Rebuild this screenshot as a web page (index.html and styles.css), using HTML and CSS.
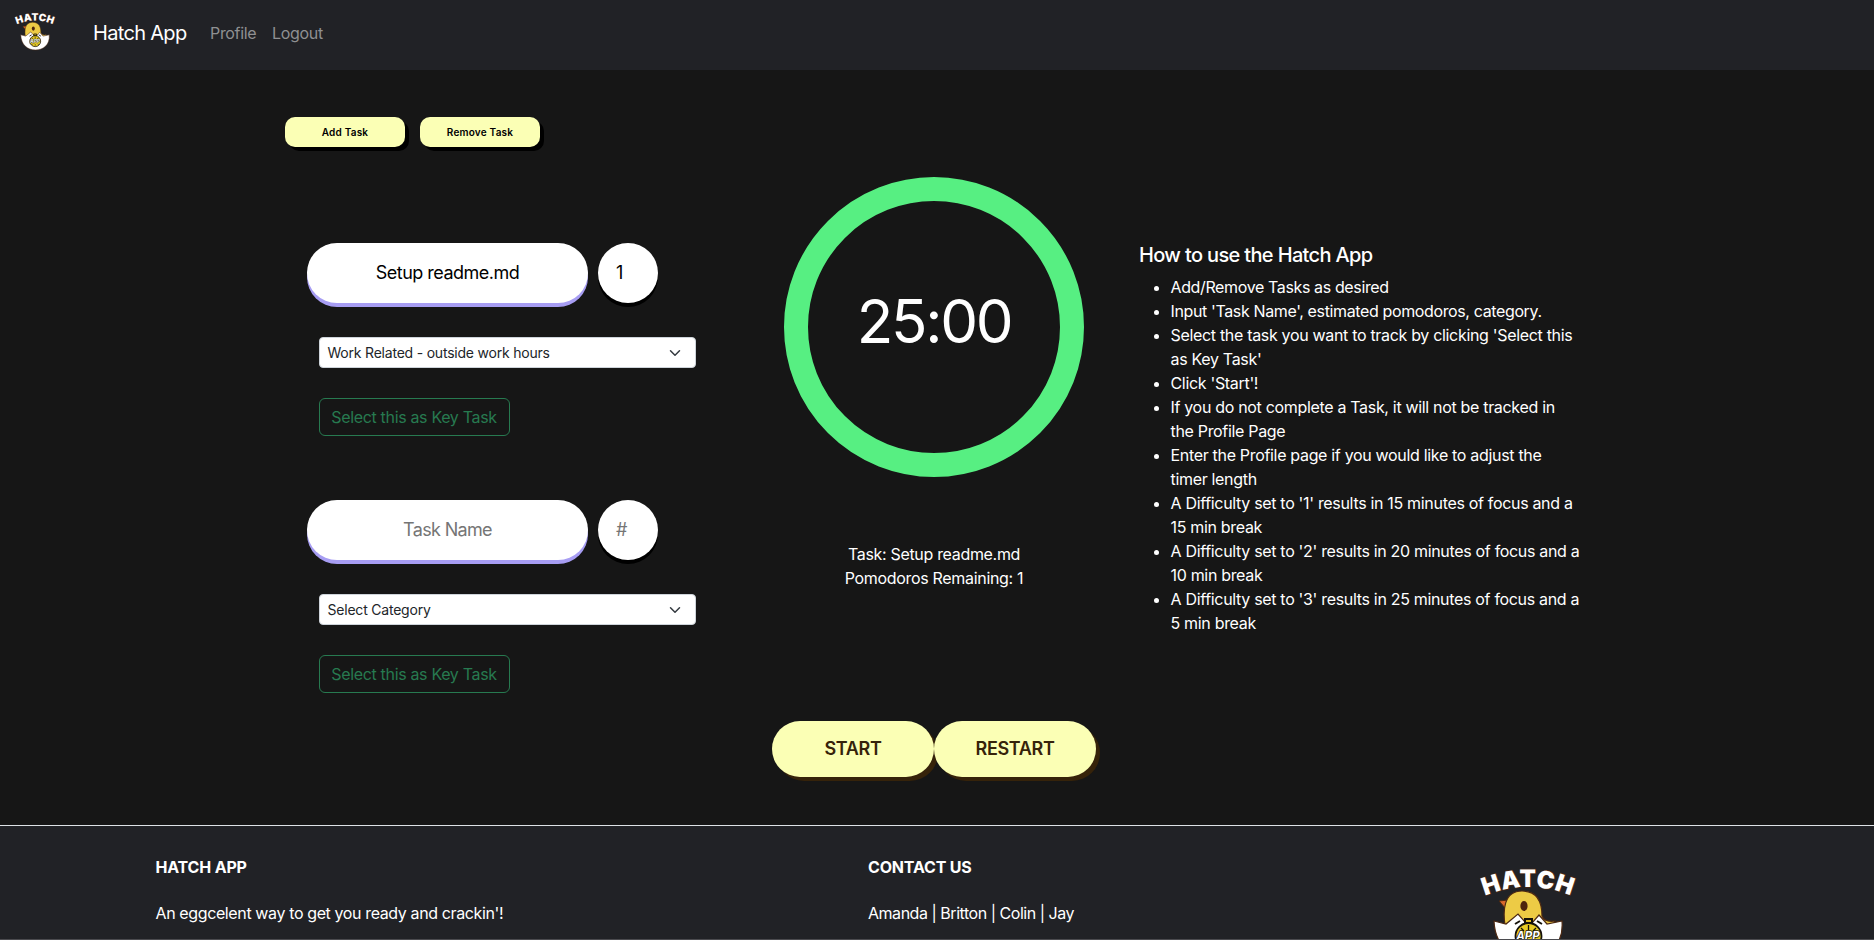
FILE: index.html
```
<!DOCTYPE html>
<html lang="en">
<head>
<meta charset="utf-8">
<title>Hatch App</title>
<link rel="stylesheet" href="styles.css">
</head>
<body>
<nav class="navbar">
  <svg class="nav-logo" viewBox="0 0 100 92">
    <path id="arc-nav" d="M2 31 Q50 9 98 31" fill="none"/>
    <text class="logo-word" text-anchor="middle"><textPath href="#arc-nav" startOffset="50%">HATCH</textPath></text>
    <path d="M21 34l9-1-2 9z" fill="#d9682c" stroke="#4d2912"/>
    <path d="M27 58C25 45 25 24 44 24c17 0 20 13 20 25 2 5 6 6 13 5l-7 14H30z" fill="#edcb45" stroke="#4d2912" stroke-width="1.2"/>
    <ellipse cx="46" cy="39" rx="3.6" ry="5" fill="#4d240d"/>
    <path d="M16 54l12 3 12-10 7 8h8l6-7 8 9 15-3C86 78 70 90 51 90S17 78 16 54z" fill="#fff" stroke="#4d2912" stroke-width="1.2"/>
    <path d="M47 52h7v4h-7zM37 57l5-3M64 57l-5-3" fill="#e3bd20" stroke="#16120a" stroke-width="2"/>
    <circle cx="50.500" cy="69" r="13" fill="#e8cb24" stroke="#16120a" stroke-width="1.800"/>
    <path d="M50.500 58v5M43 61l3 3M58 61l-3 3M50.500 76v4M44 76l-2 2M57 76l2 2" stroke="#16120a" stroke-width="1.300"/>
    <text class="logo-app" x="50" y="73" text-anchor="middle">APP</text>
  </svg>
  <a class="brand">Hatch App</a>
  <a class="nav-link profile">Profile</a>
  <a class="nav-link">Logout</a>
</nav>

<main class="main">
  <div class="toolbar">
    <button class="tool-btn">Add Task</button>
    <button class="tool-btn">Remove Task</button>
  </div>
  <div class="columns">
    <section class="tasks">
      <div class="task">
        <div class="task-row">
          <div class="task-name">Setup readme.md</div>
          <div class="task-count">1</div>
        </div>
        <div class="select">Work Related - outside work hours
          <svg class="chevron" viewBox="0 0 16 16"><path d="M2 5l6 6 6-6"/></svg></div>
        <button class="key-btn">Select this as Key Task</button>
      </div>
      <div class="task">
        <div class="task-row">
          <div class="task-name empty">Task Name</div>
          <div class="task-count empty">#</div>
        </div>
        <div class="select">Select Category
          <svg class="chevron" viewBox="0 0 16 16"><path d="M2 5l6 6 6-6"/></svg></div>
        <button class="key-btn">Select this as Key Task</button>
      </div>
    </section>

    <section class="timer">
      <div class="ring"><span class="clock">25:00</span></div>
      <div class="status">Task: Setup readme.md<br>Pomodoros Remaining: 1</div>
      <div class="controls">
        <button class="control">START</button>
        <button class="control">RESTART</button>
      </div>
    </section>

    <section class="help">
      <h5 class="help-title">How to use the Hatch App</h5>
      <ul class="help-list">
        <li class="tight">Add/Remove Tasks as desired</li>
        <li class="tight">Input 'Task Name', estimated pomodoros, category.</li>
        <li>Select the task you want to track by clicking 'Select this<br>as Key Task'</li>
        <li>Click 'Start'!</li>
        <li>If you do not complete a Task, it will not be tracked in<br>the Profile Page</li>
        <li>Enter the Profile page if you would like to adjust the<br>timer length</li>
        <li>A Difficulty set to '1' results in 15 minutes of focus and a<br>15 min break</li>
        <li>A Difficulty set to '2' results in 20 minutes of focus and a<br>10 min break</li>
        <li>A Difficulty set to '3' results in 25 minutes of focus and a<br>5 min break</li>
      </ul>
    </section>
  </div>
</main>

<footer class="footer">
  <div class="foot-col about"><h6 class="foot-title">HATCH APP</h6><p class="foot-text">An eggcelent way to get you ready and crackin'!</p></div>
  <div class="foot-col contact"><h6 class="foot-title">CONTACT US</h6><p class="foot-text">Amanda | Britton | Colin | Jay</p></div>
  <svg class="foot-logo" viewBox="0 0 100 92">
    <path id="arc-foot" d="M2 31 Q50 9 98 31" fill="none"/>
    <text class="logo-word" text-anchor="middle"><textPath href="#arc-foot" startOffset="50%">HATCH</textPath></text>
    <path d="M21 34l9-1-2 9z" fill="#d9682c" stroke="#4d2912"/>
    <path d="M27 58C25 45 25 24 44 24c17 0 20 13 20 25 2 5 6 6 13 5l-7 14H30z" fill="#edcb45" stroke="#4d2912" stroke-width="1.2"/>
    <ellipse cx="46" cy="39" rx="3.6" ry="5" fill="#4d240d"/>
    <path d="M16 54l12 3 12-10 7 8h8l6-7 8 9 15-3C86 78 70 90 51 90S17 78 16 54z" fill="#fff" stroke="#4d2912" stroke-width="1.2"/>
    <path d="M47 52h7v4h-7zM37 57l5-3M64 57l-5-3" fill="#e3bd20" stroke="#16120a" stroke-width="2"/>
    <circle cx="50.500" cy="69" r="13" fill="#e8cb24" stroke="#16120a" stroke-width="1.800"/>
    <path d="M50.500 58v5M43 61l3 3M58 61l-3 3M50.500 76v4M44 76l-2 2M57 76l2 2" stroke="#16120a" stroke-width="1.300"/>
    <text class="logo-app" x="50" y="73" text-anchor="middle">APP</text>
  </svg>
</footer>
</body>
</html>
```
FILE: styles.css
```
* { box-sizing: border-box; }
body {
  margin: 0;
  height: 940px;
  overflow: hidden;
  background: #161616;
  color: #fff;
  font: 16px/24px Inter, sans-serif;
  letter-spacing: -0.32px;
}
button { font-family: inherit; border: 0; padding: 0; }
.logo-word { font: 900 24px Inter, sans-serif; letter-spacing: 0.4px; fill: #fff; stroke: #4d2912; stroke-width: 1.5px; paint-order: stroke; }
.logo-app { font: italic 700 11.5px Inter, sans-serif; letter-spacing: 0; fill: #fff; stroke: #16120a; stroke-width: 1.6px; paint-order: stroke; }

.navbar { height: 70px; display: flex; background: #212226; padding: 12px 0 0 13.500px; }
.nav-logo { width: 42px; height: 39px; overflow: visible; }
.brand { margin-left: 37.500px; width: 117px; font-size: 20px; line-height: 42px; letter-spacing: -0.68px; }
.nav-link { line-height: 42px; color: #8f9092; }
.profile { width: 62px; }

.main { height: 755px; padding: 47px 0 0 285px; }
.toolbar { display: flex; gap: 15px; }
.tool-btn {
  width: 120px; height: 30px;
  border-radius: 10px;
  background: #fbffb5;
  box-shadow: 4px 4px 0 #000;
  color: #000;
  font-size: 10px; font-weight: 600;
  letter-spacing: 0.2px;
}
.columns { display: flex; }
.tasks { width: 487px; padding: 96px 0 0 22px; }
.task { height: 257px; }
.task-row { display: flex; gap: 10px; margin-bottom: 34px; }
.task-name {
  width: 281px; height: 60px;
  border-radius: 30px;
  background: #fff;
  box-shadow: 0 4px 0 #a79df3;
  color: #000;
  font-size: 18px; line-height: 60px;
  letter-spacing: -0.52px;
  text-align: center;
}
.task-count {
  width: 60px; height: 60px;
  padding-left: 18px;
  border-radius: 50%;
  background: #fff;
  box-shadow: 0 4px 0 #000;
  color: #000;
  font-size: 18px; line-height: 60px;
}
.task-name.empty { letter-spacing: -0.65px; color: #757575; }
.task-count.empty { color: #757575; }
.select {
  display: flex; justify-content: space-between; align-items: center;
  width: 377px; height: 31px;
  margin: 0 0 30px 12px;
  padding: 0 12px 0 7.500px;
  border: 1px solid #ced4da; border-radius: 4px;
  background: #fff;
  color: #212529;
  font-size: 14px;
  letter-spacing: -0.21px;
}
.chevron { width: 16px; height: 12px; fill: none; stroke: #343a40; stroke-width: 2; stroke-linecap: round; stroke-linejoin: round; }
.key-btn {
  display: block;
  width: 191px; height: 38px;
  margin-left: 12px;
  padding-right: 1px;
  border: 1px solid #277a50; border-radius: 6px;
  background: transparent;
  color: #277a50;
  font-size: 16px;
  letter-spacing: -0.33px;
}

.timer { width: 324px; padding-top: 30px; }
.ring {
  width: 300px; height: 300px;
  margin: 0 auto;
  border: 24px solid #57ef82; border-radius: 50%;
  text-align: center;
}
.clock { font-size: 60px; line-height: 241px; letter-spacing: -2.300px; }
.status { margin-top: 65px; text-align: center; }
.controls { display: flex; margin-top: 131px; }
.control {
  flex: 1; height: 56px;
  padding-bottom: 1px;
  border-radius: 28px;
  background: #fbffb5;
  box-shadow: 4px 4px 0 #36230a;
  color: #36230a;
  font-size: 18px; font-weight: 600;
  letter-spacing: -0.35px;
}

.help { margin-left: 43px; padding-top: 96px; white-space: nowrap; }
.help-title { margin: 0 0 8px; font-size: 20px; line-height: 24px; font-weight: 500; letter-spacing: -0.65px; }
.help-list { margin: 0; padding-left: 31.500px; }
.tight { letter-spacing: -0.37px; }

.footer { height: 115px; display: flex; padding: 0 0 0 155.500px; background: #212226; border-top: 1px solid #dee2e6; border-bottom: 1px solid #4b4b4f; overflow: hidden; }
.foot-col { padding-top: 29px; }
.about { width: 712.500px; letter-spacing: -0.38px; }
.contact { width: 610px; letter-spacing: -0.47px; }
.foot-title { margin: 0 0 22px; font-size: 16px; line-height: 24px; font-weight: 700; letter-spacing: -0.18px; }
.foot-text { margin: 0; }
.foot-logo { width: 100px; height: 92px; margin-top: 41px; flex: none; overflow: visible; }
```
